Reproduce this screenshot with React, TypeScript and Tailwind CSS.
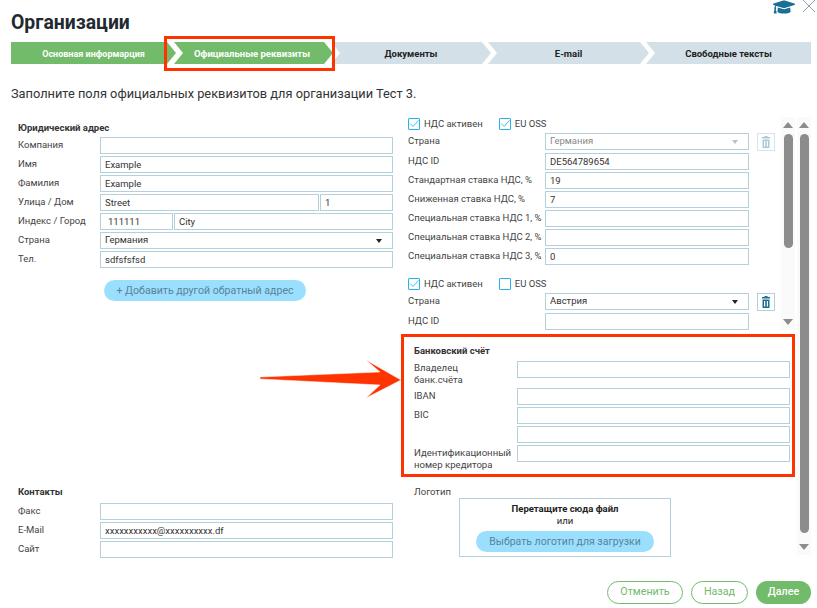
import React from 'react';
import { FaGraduationCap } from 'react-icons/fa';

const inputCls =
  'h-[17px] min-w-0 border border-[#b4d0dc] bg-white px-1 text-[9.5px] text-[#333] outline-none';

const Field = ({ value = '', className = '' }: { value?: string; className?: string }) => (
  <input readOnly value={value} className={`${inputCls} ${className}`} />
);

const Caret = ({ muted = false }: { muted?: boolean }) => (
  <svg width="6" height="4" viewBox="0 0 6 4" className="shrink-0">
    <path d="M0 0h6L3 4z" fill={muted ? '#b5c2c8' : '#222'} />
  </svg>
);

const Select = ({ value, muted = false }: { value: string; muted?: boolean }) => (
  <div className={`flex h-[17px] flex-1 items-center justify-between border border-[#b4d0dc] pl-1 pr-[10px] text-[9.5px] ${muted ? 'text-[#888]' : 'text-[#333]'}`}>
    <span>{value}</span>
    <Caret muted={muted} />
  </div>
);

const Row = ({ label, width, children }: { label: string; width: string; children: React.ReactNode }) => (
  <div className="flex h-[17px]">
    <div className={`${width} shrink-0 whitespace-nowrap text-[9.5px] leading-[16px] text-[#444]`}>{label}</div>
    {children}
  </div>
);

const Check = ({ on, label }: { on: boolean; label: string }) => (
  <label className="flex items-center gap-[4px] text-[9.5px] text-[#444]">
    <span className="flex h-[12px] w-[12px] items-center justify-center rounded-[1px] border border-[#29b2f0]">
      {on && (
        <svg width="12" height="12" viewBox="0 0 12 12">
          <path d="M1.5 5.5 L5 9 L11.5 1.5" fill="none" stroke="#29b2f0" strokeWidth="1" />
        </svg>
      )}
    </span>
    {label}
  </label>
);

const Trash = ({ muted = false }: { muted?: boolean }) => (
  <div className={`ml-2 flex h-[18px] w-[18px] items-center justify-center border ${muted ? 'border-[#d5e4ea]' : 'border-[#b4d0dc]'}`}>
    <svg width="8" height="12" viewBox="0 0 8 12">
      <path
        fillRule="evenodd"
        fill={muted ? '#a9cbd9' : '#1b6e94'}
        d="M2.5 0h3v1H8v1.5H0V1h2.5zM.5 3.5h7V12h-7zM2 5v5.5h1.2V5zM4.8 5v5.5H6V5z"
      />
    </svg>
  </div>
);

const Arrow = ({ up = false }: { up?: boolean }) => (
  <svg width="10" height="6" viewBox="0 0 10 6" className="shrink-0">
    <path d={up ? 'M5 0l5 6H0z' : 'M0 0h10L5 6z'} fill="#8c8c8c" />
  </svg>
);

const Scrollbar = ({ thumb, height }: { thumb: string; height: string }) => (
  <div className={`flex w-[14px] shrink-0 flex-col items-center bg-[#fafafa] ${height}`}>
    <div className="mt-[5px]">
      <Arrow up />
    </div>
    <div className={`mt-[6px] w-[9px] rounded-full bg-[#8c8c8c] ${thumb}`} />
    <div className="mt-auto mb-[5px]">
      <Arrow />
    </div>
  </div>
);

const tabShape = {
  first: '[clip-path:polygon(0_0,calc(100%-9px)_0,100%_50%,calc(100%-9px)_100%,0_100%)]',
  mid: '[clip-path:polygon(0_0,calc(100%-9px)_0,100%_50%,calc(100%-9px)_100%,0_100%,9px_50%)]',
  last: '[clip-path:polygon(0_0,100%_0,100%_100%,0_100%,9px_50%)]',
};

const Tabs = () => (
  <div className="relative ml-[11px] mr-[6px] mt-[7px] flex h-[22px] text-[9.5px] font-bold">
    <div className={`flex w-[165px] items-center justify-center bg-[#72bb6a] pt-[3px] text-[9px] text-white ${tabShape.first}`}>
      Основная информарция
    </div>
    <div className={`-ml-[2px] flex w-[159px] items-center justify-center bg-[#72bb6a] pr-[3px] pt-[2px] text-white ${tabShape.mid}`}>
      Официальные реквизиты
    </div>
    <div className={`-ml-[2px] flex w-[160px] items-center justify-center bg-[#d3e0e8] pt-[2px] text-[#222] ${tabShape.mid}`}>
      Документы
    </div>
    <div className={`-ml-[3px] flex w-[161px] items-center justify-center bg-[#d3e0e8] pt-[2px] text-[#222] ${tabShape.mid}`}>
      E-mail
    </div>
    <div className={`-ml-[3px] flex flex-1 items-center justify-center bg-[#d3e0e8] pt-[2px] text-[#222] ${tabShape.last}`}>
      Свободные тексты
    </div>
    <div className="absolute left-[153px] top-[-6px] h-[35px] w-[171px] border-[3px] border-[#ff3300]" />
  </div>
);

const VatGroup = ({ children }: { children: React.ReactNode }) => (
  <div className="flex flex-col gap-[2px]">{children}</div>
);

const App = () => {
  const w = 'w-[137px]';
  return (
    <div className="relative flex h-[608px] w-[817px] flex-col overflow-hidden bg-white font-['Roboto',sans-serif] text-[#333]">
      <div className="flex h-[35px]">
        <h1 className="ml-[11px] mt-[11px] text-[19.4px] font-bold leading-[24px] text-[#1f2a30]">Организации</h1>
        <div className="ml-auto flex items-start gap-[7px] pr-[1px]">
          <FaGraduationCap className="-mt-[4px] text-[22px] text-[#1b6e94]" />
          <svg width="14" height="12" viewBox="0 0 14 12">
            <path d="M1 0l12 12M13 0L1 12" stroke="#8b9cb3" strokeWidth="1" fill="none" />
          </svg>
        </div>
      </div>

      <Tabs />

      <p className="ml-[11px] mt-[22px] text-[12.8px] leading-[16px] text-[#333]">
        Заполните поля официальных реквизитов для организации Тест 3.
      </p>

      <div className="mt-[15px] flex h-[441px]">
        {/* left column */}
        <div className="ml-[18px] flex w-[375px] flex-col justify-between">
          <div>
            <div className="mt-px text-[9.5px] font-bold leading-[19px] text-[#333]">Юридический адрес</div>
            <div className="flex flex-col gap-[2px]">
              <Row label="Компания" width="w-[82px]"><Field className="flex-1" /></Row>
              <Row label="Имя" width="w-[82px]"><Field className="flex-1" value="Example" /></Row>
              <Row label="Фамилия" width="w-[82px]"><Field className="flex-1" value="Example" /></Row>
              <Row label="Улица / Дом" width="w-[82px]">
                <Field className="w-[219px]" value="Street" />
                <Field className="ml-px flex-1" value="1" />
              </Row>
              <Row label="Индекс / Город" width="w-[82px]">
                <Field className="w-[73px] pl-[7px]" value="111111" />
                <Field className="ml-px flex-1" value="City" />
              </Row>
              <Row label="Страна" width="w-[82px]"><Select value="Германия" /></Row>
              <Row label="Тел." width="w-[82px]"><Field className="flex-1" value="sdfsfsfsd" /></Row>
            </div>
            <button className="ml-[86px] mt-[12px] h-[21px] w-[202px] rounded-full bg-[#9bdfff] text-[10.6px] text-[#5a8398]">
              + Добавить другой обратный адрес
            </button>
          </div>
          <div>
            <div className="text-[9.5px] font-bold leading-[14px] text-[#333]">Контакты</div>
            <div className="mt-[4px] flex flex-col gap-[2px]">
              <Row label="Факс" width="w-[82px]"><Field className="flex-1" /></Row>
              <Row label="E-Mail" width="w-[82px]"><Field className="flex-1" value="xxxxxxxxxxx@xxxxxxxxxx.df" /></Row>
              <Row label="Сайт" width="w-[82px]"><Field className="flex-1" /></Row>
            </div>
          </div>
        </div>

        {/* right column */}
        <div className="ml-[15px] flex w-[387px] flex-col">
          <div className="flex h-[213px] overflow-hidden">
            <div className="w-[367px] overflow-hidden">
              <div className="flex h-[14px] items-center gap-[16px]">
                <Check on label="НДС активен" />
                <Check on label="EU OSS" />
              </div>
              <div className="mt-[2px]">
                <VatGroup>
                  <div className="mb-px">
                    <Row label="Страна" width={w}>
                      <Select value="Германия" muted />
                      <Trash muted />
                    </Row>
                  </div>
                  <Row label="НДС ID" width={w}><Field className="w-[204px]" value="DE564789654" /></Row>
                  <Row label="Стандартная ставка НДС, %" width={w}><Field className="w-[204px]" value="19" /></Row>
                  <Row label="Сниженная ставка НДС, %" width={w}><Field className="w-[204px]" value="7" /></Row>
                  <Row label="Специальная ставка НДС 1, %" width={w}><Field className="w-[204px]" /></Row>
                  <Row label="Специальная ставка НДС 2, %" width={w}><Field className="w-[204px]" /></Row>
                  <Row label="Специальная ставка НДС 3, %" width={w}><Field className="w-[204px]" value="0" /></Row>
                </VatGroup>
              </div>
              <div className="mt-[12px] flex h-[14px] items-center gap-[16px]">
                <Check on label="НДС активен" />
                <Check on={false} label="EU OSS" />
              </div>
              <div className="mt-[2px]">
                <VatGroup>
                  <div className="mb-px">
                    <Row label="Страна" width={w}>
                      <Select value="Австрия" />
                      <Trash />
                    </Row>
                  </div>
                  <Row label="НДС ID" width={w}><Field className="w-[204px]" /></Row>
                </VatGroup>
              </div>
            </div>
            <div className="ml-[6px]">
              <Scrollbar thumb="h-[114px]" height="h-[213px]" />
            </div>
          </div>

          <div className="-ml-[7px] mt-[4px] h-[143px] w-[394px] border-[3px] border-[#ff3300] pl-[10px] pr-[2px]">
            <div className="mt-[7px] text-[9.5px] font-bold leading-[14px] text-[#333]">Банковский счёт</div>
            <div className="mt-[3px] flex flex-col gap-[2px]">
              <div className="flex h-[25px]">
                <div className="w-[103px] pt-px text-[9.6px] leading-[12px] text-[#444]">Владелец<br />банк.счёта</div>
                <Field className="flex-1" />
              </div>
              <Row label="IBAN" width="w-[103px]"><Field className="flex-1" /></Row>
              <Row label="BIC" width="w-[103px]"><Field className="flex-1" /></Row>
              <Row label="" width="w-[103px]"><Field className="flex-1" /></Row>
              <div className="flex">
                <div className="w-[103px] pt-[2px] text-[9.6px] leading-[12px] text-[#444]">Идентификационный<br />номер кредитора</div>
                <Field className="flex-1" />
              </div>
            </div>
          </div>

          <div className="mt-[8px] flex">
            <div className="ml-[6px] w-[45px] text-[9.5px] leading-[14px] text-[#444]">Логотип</div>
            <div className="mt-[13px] flex h-[59px] w-[212px] flex-col items-center border border-[#b4d0dc]">
              <div className="mt-[4px] text-[9.5px] font-bold leading-[12px] text-[#222]">Перетащите сюда файл</div>
              <div className="text-[9.5px] leading-[12px] text-[#222]">или</div>
              <button className="mt-[4px] h-[21px] w-[178px] rounded-full bg-[#9bdfff] text-[10.5px] text-[#5a8398]">
                Выбрать логотип для загрузки
              </button>
            </div>
          </div>
        </div>

        <div className="ml-[2px]">
          <Scrollbar thumb="h-[399px]" height="h-[438px]" />
        </div>
      </div>

      <div className="mt-[23px] flex justify-end gap-2 pr-[6px] text-[10.7px]">
        <button className="h-[23px] w-[76px] rounded-full border border-[#72bb6a] text-[#72bb6a]">Отменить</button>
        <button className="h-[23px] w-[57px] rounded-full border border-[#72bb6a] text-[#72bb6a]">Назад</button>
        <button className="h-[23px] w-[55px] rounded-full bg-[#72bb6a] font-medium text-white">Далее</button>
      </div>

      {/* annotation arrow over the page */}
      <svg className="absolute left-[255px] top-[355px]" width="150" height="50" viewBox="255 355 150 50">
        <path
          d="M260 377 L380 372 L366 360 L401 380 L366 398 L380 385 L260 379 Z"
          fill="#ff3300"
          stroke="#fff"
          strokeWidth="0.5"
        />
      </svg>
    </div>
  );
};

export default App;
